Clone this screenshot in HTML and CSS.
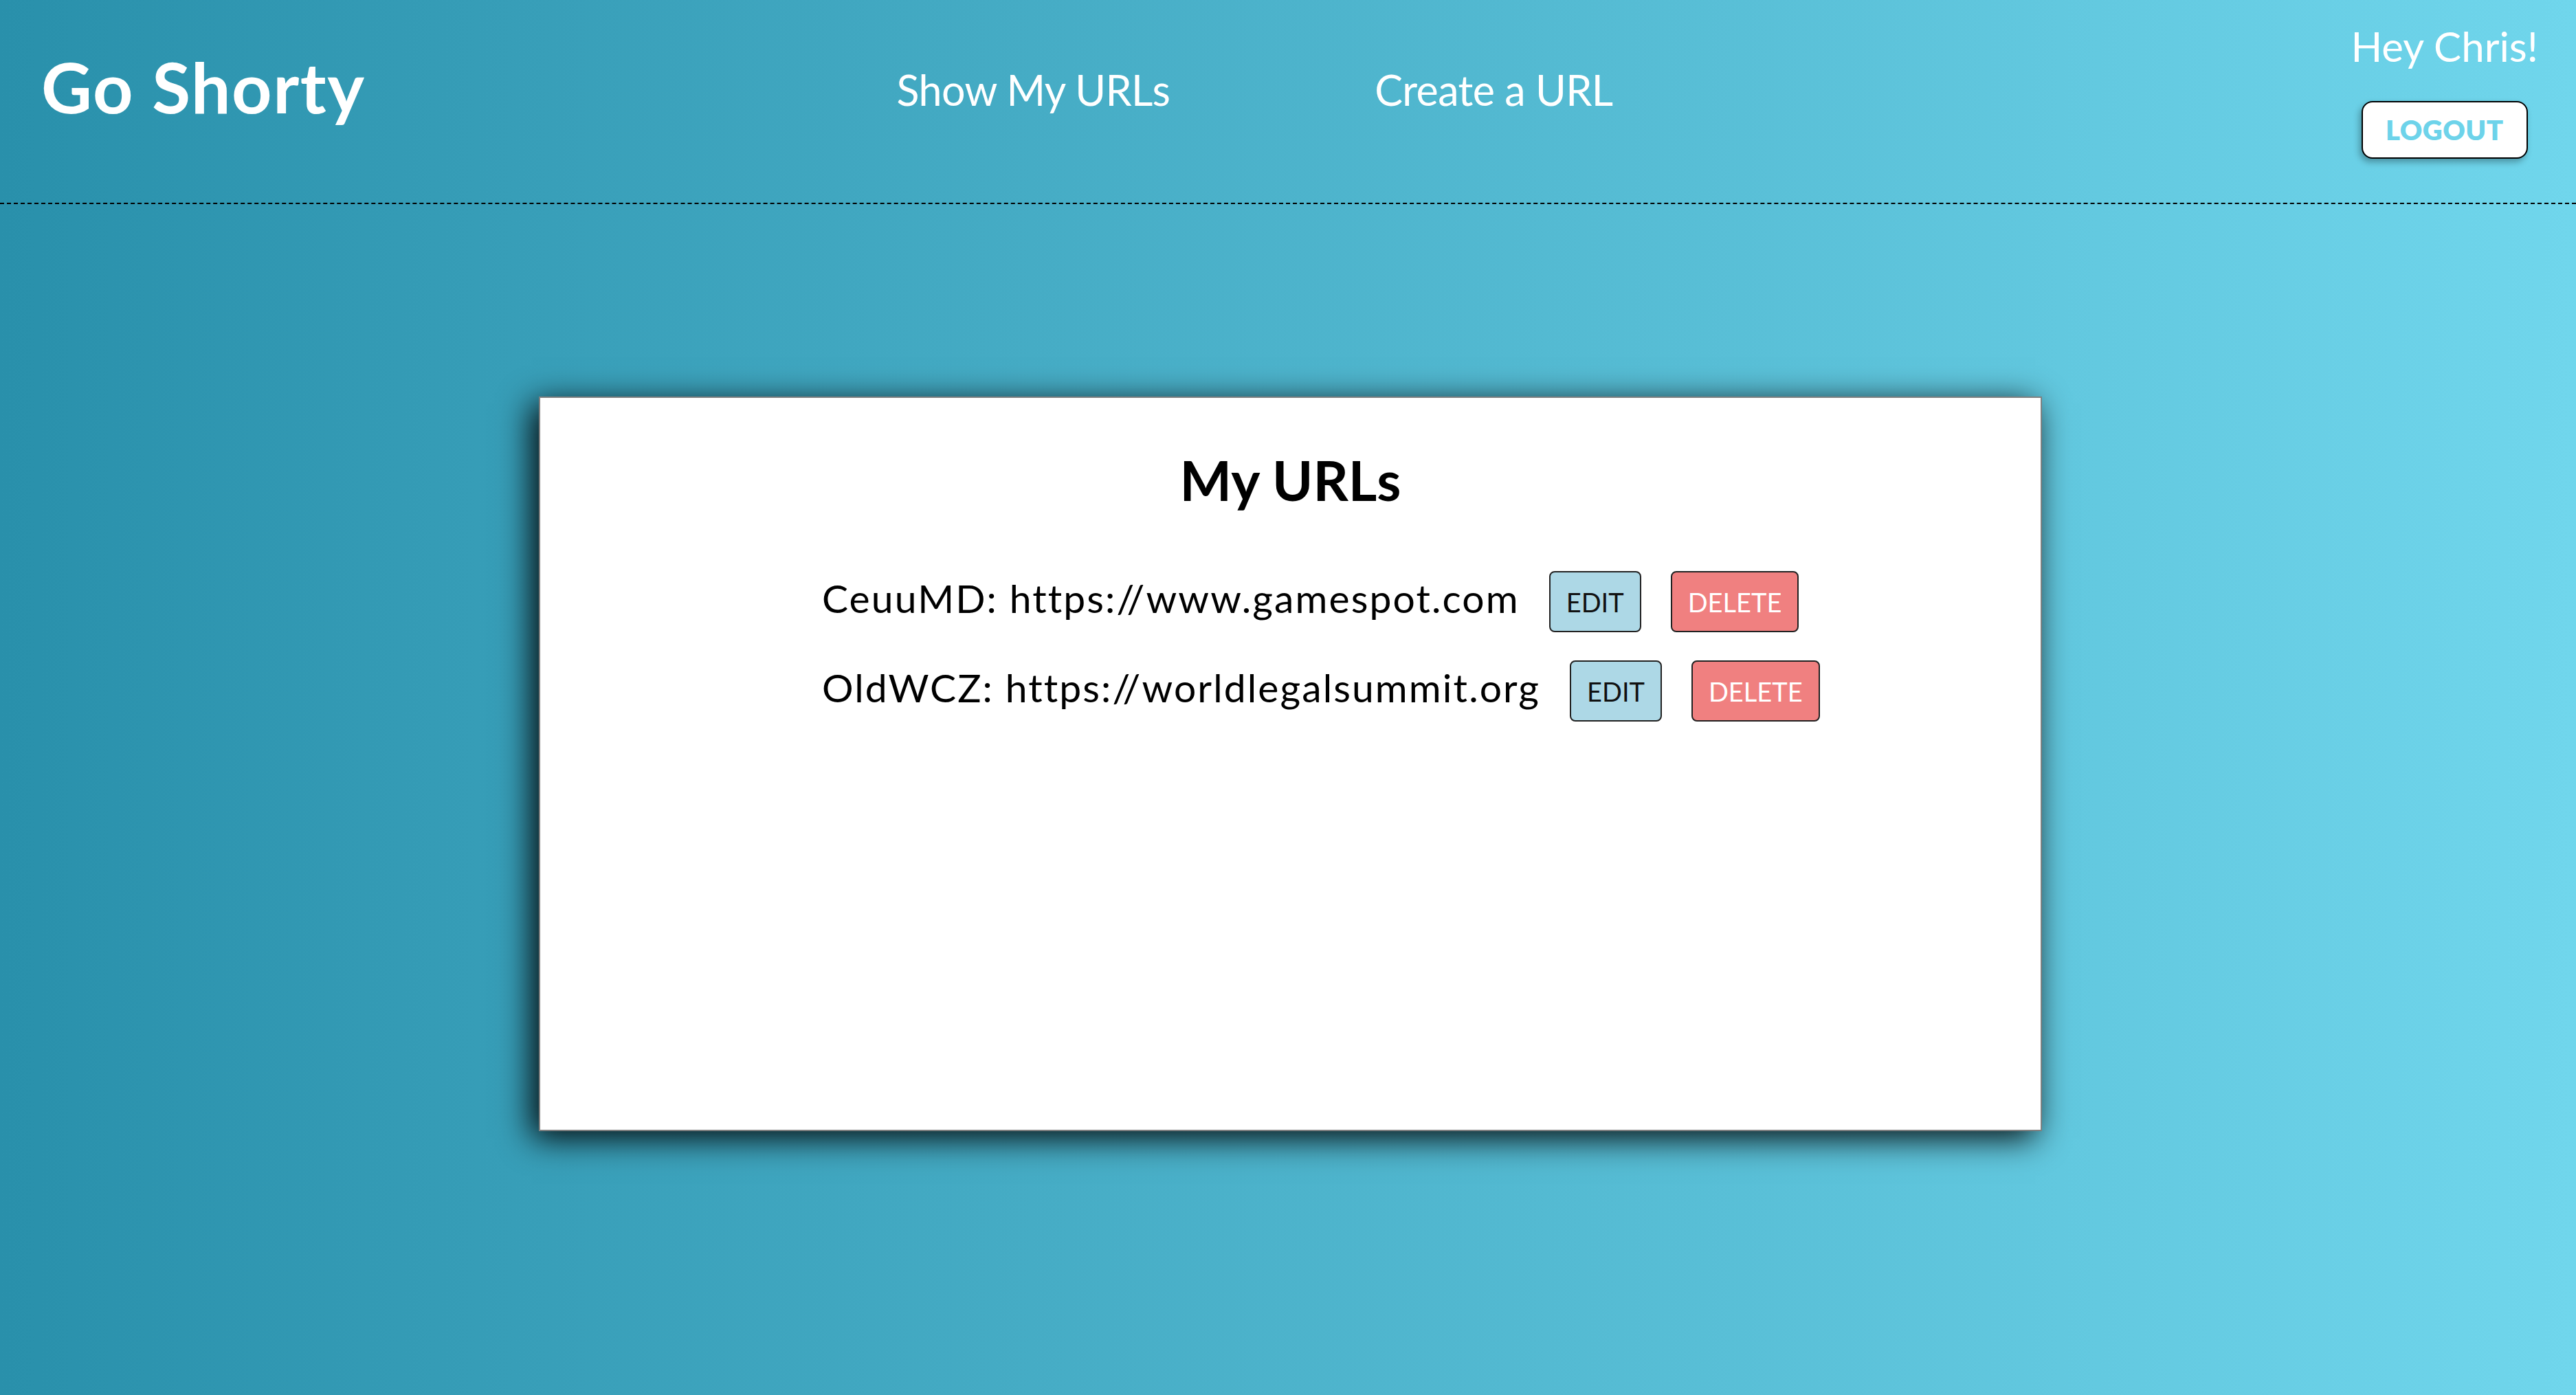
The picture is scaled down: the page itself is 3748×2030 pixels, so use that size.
FILE: index.html
```html
<!DOCTYPE html>
<html lang="en">
<head>
<meta charset="utf-8">
<title>Go Shorty</title>
<link rel="stylesheet" href="styles.css">
</head>
<body>
<header class="topbar">
  <div class="logo">Go Shorty</div>
  <nav class="nav">
    <a class="nav-link" href="#">Show My URLs</a>
    <a class="nav-link" href="#">Create a URL</a>
  </nav>
  <div class="user">
    <div class="greeting">Hey Chris!</div>
    <button class="logout">LOGOUT</button>
  </div>
</header>
<main class="main">
  <section class="card">
    <h1 class="card-title">My URLs</h1>
    <ul class="url-list">
      <li class="url-row">
        <span class="url-text">CeuuMD: https://www.gamespot.com</span>
        <button class="btn btn-edit">EDIT</button>
        <button class="btn btn-delete">DELETE</button>
      </li>
      <li class="url-row">
        <span class="url-text">OldWCZ: https://worldlegalsummit.org</span>
        <button class="btn btn-edit">EDIT</button>
        <button class="btn btn-delete">DELETE</button>
      </li>
    </ul>
  </section>
</main>
</body>
</html>
```
FILE: styles.css
```css
html, body {
  margin: 0;
  padding: 0;
}
body {
  min-height: 2030px;
  background: linear-gradient(to right, #2990ab, #70d6ec);
  font-family: Lato, "Noto Sans", sans-serif;
  color: #000;
}
.topbar {
  height: 295px;
  border-bottom: 2px dashed #000;
  display: flex;
  align-items: flex-start;
  padding: 0 55px 0 60px;
}
.logo {
  margin-top: 65px;
  font-size: 102px;
  line-height: 122px;
  font-weight: 700;
  letter-spacing: 1.5px;
  color: #fff;
}
.nav {
  display: flex;
  margin-top: 94px;
  margin-left: 773px;
  gap: 298px;
}
.nav-link {
  font-size: 61px;
  line-height: 73px;
  letter-spacing: -0.6px;
  color: #fff;
  text-decoration: none;
}
.user {
  margin-left: auto;
  margin-top: 31px;
  display: flex;
  flex-direction: column;
  align-items: center;
}
.greeting {
  font-size: 60px;
  line-height: 72px;
  color: #fff;
}
.logout {
  margin-top: 44px;
  height: 84px;
  padding: 0 33px;
  border: 2px solid #000;
  border-radius: 16px;
  background: #fff;
  color: #6dd3ea;
  font-family: Lato, "Noto Sans", sans-serif;
  font-weight: 800;
  font-size: 40px;
  line-height: 48px;
  letter-spacing: 0.5px;
  box-shadow: -3px 5px 10px rgba(0, 0, 0, 0.3);
}
.main {
  display: flex;
  justify-content: center;
  padding: 280px 0 0 7px;
}
.card {
  box-sizing: border-box;
  width: 2187px;
  height: 1069px;
  background: #fff;
  border: 2px solid #808080;
  box-shadow: -10px 10px 45px rgba(0, 0, 0, 0.95);
  padding-top: 71px;
  display: flex;
  flex-direction: column;
}
.card-title {
  margin: 0;
  text-align: center;
  font-size: 80px;
  line-height: 96px;
  font-weight: 700;
}
.url-list {
  list-style: none;
  margin: 85px 0 0 410px;
  padding: 0;
  display: flex;
  flex-direction: column;
  gap: 41px;
}
.url-row {
  display: flex;
  align-items: center;
  gap: 43px;
}
.url-text {
  font-size: 57px;
  line-height: 68px;
  letter-spacing: 2.1px;
  padding-bottom: 11px;
}
.btn {
  height: 89px;
  padding: 0 23px;
  border: 2px solid #222;
  border-radius: 8px;
  font-family: Lato, "Noto Sans", sans-serif;
  font-size: 38px;
  line-height: 46px;
}
.btn-edit {
  background: #add8e6;
  color: #111;
}
.btn-delete {
  background: #f08080;
  color: #fff;
}
```
